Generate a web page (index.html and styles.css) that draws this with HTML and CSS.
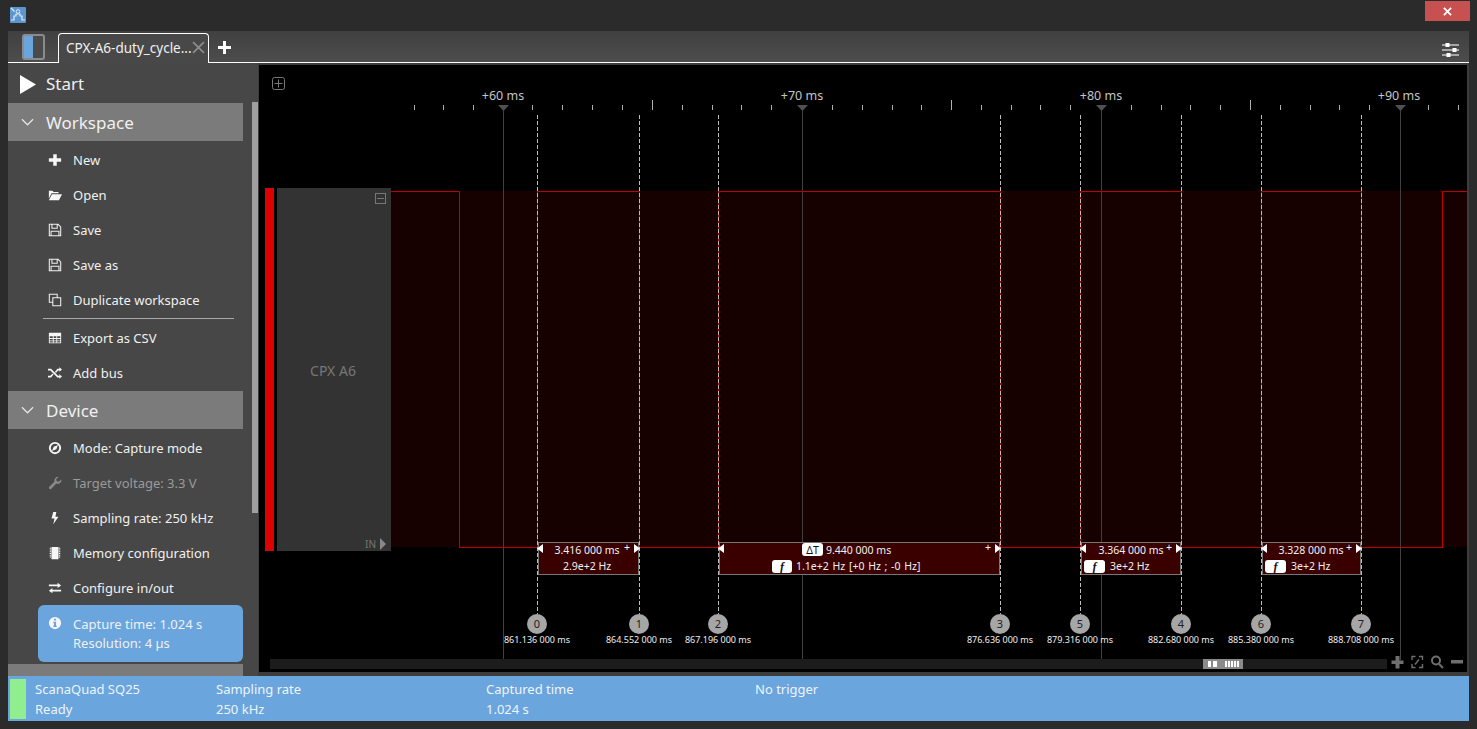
FILE: index.html
```html
<!DOCTYPE html>
<html lang="en">
<head>
  <meta charset="UTF-8">
  <title>ScanaStudio</title>
  <link rel="stylesheet" href="styles.css">
</head>
<body>

  <div class="titlebar">
    <svg class="app-icon" viewBox="0 0 16 16">
      <rect width="16" height="16" rx="1" fill="#5b96cf"/>
      <path d="M1 13h3V9h2V7h4v2h2v4h3M1 1l3.500 3.500" fill="none" stroke="#dfeaf5" stroke-width="1.200"/>
      <circle cx="8" cy="4.500" r="1.800" fill="none" stroke="#dfeaf5"/>
    </svg>
    <div class="close-btn">
      <svg viewBox="0 0 10 10"><path d="M1 1l8 8M9 1l-8 8" stroke="#fff" stroke-width="2"/></svg>
    </div>
  </div>

  <div class="tabbar">
    <div class="panel-toggle"><span></span></div>
    <div class="tab">
      <span class="tab-name">CPX-A6-duty_cycle...</span>
      <svg class="tab-close" viewBox="0 0 12 12"><path d="M1 1l10 10M11 1L1 11" stroke="#8c8c8c" stroke-width="1.600"/></svg>
    </div>
    <svg class="tab-add" viewBox="0 0 13 13"><path d="M5 0h3v5h5v3H8v5H5V8H0V5h5z" fill="#fff"/></svg>
    <svg class="tab-settings" viewBox="0 0 17 14">
      <path d="M0 2h17M0 7h17M0 12h17" stroke="#c8c8c8" stroke-width="1.400"/>
      <path d="M3.500 0h4v4h-4zM10.500 5h4v4h-4zM4.500 10h4v4h-4z" fill="#fff"/>
    </svg>
  </div>

  <div class="main">
    <div class="sidebar">
      <div class="side-list">
        <div class="start-row">
          <svg class="start-icon" viewBox="0 0 16 19"><path d="M0 0l16 9.500L0 19z" fill="#fff"/></svg>
          <span>Start</span>
        </div>

        <div class="section-head">
          <svg class="chevron" viewBox="0 0 14 8"><path d="M1 1l6 6 6-6" fill="none" stroke="#e6e6e6" stroke-width="1.300"/></svg>
          <span>Workspace</span>
        </div>
        <div class="section-body">
          <div class="item">
            <svg class="icon" viewBox="0 0 16 16"><path d="M6 1.500h4V6h5v4h-5v4.500H6V10H1V6h5z"/></svg>
            New
          </div>
          <div class="item">
            <svg class="icon" viewBox="0 0 16 16"><path d="M1 3h4l1.500 1.500H12V6H4L1 12zM1 14l3.500-7H16l-3.500 7z"/></svg>
            Open
          </div>
          <div class="item">
            <svg class="icon icon-line" viewBox="0 0 16 16"><path d="M1.500 1.500h10l3 3v10h-13zM4.500 1.500V6h6V1.500M3.500 14.500v-5h9v5"/></svg>
            Save
          </div>
          <div class="item">
            <svg class="icon icon-line" viewBox="0 0 16 16"><path d="M1.500 1.500h10l3 3v10h-13zM4.500 1.500V6h6V1.500M3.500 14.500v-5h9v5"/></svg>
            Save as
          </div>
          <div class="item">
            <svg class="icon icon-line" viewBox="0 0 16 16"><path d="M5 10.500H1.500v-9h9V5M5.500 5.500h9v9h-9z"/></svg>
            Duplicate workspace
          </div>
          <div class="divider"></div>
          <div class="item">
            <svg class="icon" viewBox="0 0 16 16"><path fill-rule="evenodd" d="M1 2h14v12H1zM2 6v2h3.500V6zM6.500 6v2h3V6zM10.500 6v2H14V6zM2 9v1.800h3.500V9zM6.500 9v1.800h3V9zM10.500 9v1.800H14V9zM2 11.800V13h3.500v-1.200zM6.500 11.800V13h3v-1.200zM10.500 11.800V13H14v-1.200z"/></svg>
            Export as CSV
          </div>
          <div class="item">
            <svg class="icon" viewBox="0 0 16 16"><path d="M13 1.500L16 4l-3 2.500V5h-1.500L9 8l-1-1.300L10.800 3H13zM0 3h3.500l8 8H13V9.500l3 2.500-3 2.500V13h-2.300l-8-8H0zM0 11h2.700L5.300 8.600l1 1.200L3.500 13H0z"/></svg>
            Add bus
          </div>
        </div>

        <div class="section-head">
          <svg class="chevron" viewBox="0 0 14 8"><path d="M1 1l6 6 6-6" fill="none" stroke="#e6e6e6" stroke-width="1.300"/></svg>
          <span>Device</span>
        </div>
        <div class="section-body">
          <div class="item">
            <svg class="icon" viewBox="0 0 16 16"><path fill-rule="evenodd" d="M8 1a7 7 0 1 1 0 14A7 7 0 0 1 8 1zM8 3.200a4.800 4.800 0 1 0 0 9.600A4.800 4.800 0 0 0 8 3.200zM11.500 4.500L9.500 9.500l-5 2 2-5z"/></svg>
            Mode: Capture mode
          </div>
          <div class="item item-off">
            <svg class="icon" viewBox="0 0 16 16"><path d="M15.500 4.500a4.500 4.500 0 0 1-6 4.200L3.800 14.500a1.600 1.600 0 0 1-2.300-2.300L7.300 6.500A4.500 4.500 0 0 1 12 1L9.300 3.700 10 6l2.300.7L15 4z"/></svg>
            Target voltage: 3.3 V
          </div>
          <div class="item">
            <svg class="icon" viewBox="0 0 16 16"><path d="M9.500 1H6L4 8.500h3.500L6 15l6-8.500H8.500z"/></svg>
            Sampling rate: 250 kHz
          </div>
          <div class="item">
            <svg class="icon" viewBox="0 0 16 16"><path d="M4 1h8v14H4zM2 2h1.500v1H2zM2 4h1.500v1H2zM2 6h1.500v1H2zM2 8h1.500v1H2zM2 10h1.500v1H2zM2 12h1.500v1H2zM12.500 2H14v1h-1.500zM12.500 4H14v1h-1.500zM12.500 6H14v1h-1.500zM12.500 8H14v1h-1.500zM12.500 10H14v1h-1.500zM12.500 12H14v1h-1.500z"/></svg>
            Memory configuration
          </div>
          <div class="item">
            <svg class="icon" viewBox="0 0 16 16"><path d="M1 4h10V2l4 3-4 3V6H1zM15 10H5V8l-4 3 4 3v-2h10z"/></svg>
            Configure in/out
          </div>
          <div class="info-box">
            <svg class="icon" viewBox="0 0 16 16"><path fill-rule="evenodd" d="M8 1a7 7 0 1 1 0 14A7 7 0 0 1 8 1zM6.800 3v2.200h2.400V3zM6 6.500V8h.8v3H6v1.500h4V11h-.8V6.500z"/></svg>
            <div>
              <div>Capture time: 1.024 s</div>
              <div>Resolution: 4 µs</div>
            </div>
          </div>
        </div>

        <div class="section-head"></div>
      </div>
      <div class="side-scroll"><div class="side-thumb"></div></div>
    </div>

    <div class="canvas">
      <svg class="wave" viewBox="259 65 1208 607" width="1208" height="607">
        <rect class="sig-fill" x="391" y="191" width="1076" height="356"/>

        <path class="grid" d="M503.500 105V660M802.500 105V660M1101.500 105V660M1400.500 105V660"/>
        <path class="sig-line" d="M391 191.500H459.500V547.500H537.500V191.500H639.500V547.500H718.500V191.500H1000.500V547.500H1080.500V191.500H1181.500V547.500H1261.500V191.500H1361.500V547.500H1442.500V191.500H1467"/>
        <path class="cursor" d="M537.500 115V614M639.500 115V614M718.500 115V614M1000.500 115V614M1080.500 115V614M1181.500 115V614M1261.500 115V614M1361.500 115V614"/>

        <!-- time ruler -->
        <path class="tick" d="M414.500 105v5M443.500 105v5M473.500 105v5M532.500 105v5M562.500 105v5M592.500 105v5M622.500 105v5M652.500 100v10M682.500 105v5M712.500 105v5M741.500 105v5M771.500 105v5M832.500 105v5M862.500 105v5M892.500 105v5M921.500 105v5M951.500 100v10M981.500 105v5M1011.500 105v5M1040.500 105v5M1070.500 105v5M1131.500 105v5M1161.500 105v5M1190.500 105v5M1220.500 105v5M1250.500 100v10M1280.500 105v5M1310.500 105v5M1339.500 105v5M1369.500 105v5M1428.500 105v5M1458.500 105v5"/>
        <path class="marker" d="M498 105h11l-5.500 6zM797 105h11l-5.500 6zM1096 105h11l-5.500 6zM1395 105h11l-5.500 6z"/>
        <text class="ruler-text" x="503" y="100">+60 ms</text>
        <text class="ruler-text" x="802" y="100">+70 ms</text>
        <text class="ruler-text" x="1101" y="100">+80 ms</text>
        <text class="ruler-text" x="1399" y="100">+90 ms</text>
        <rect class="box-icon" x="272.500" y="77.500" width="12" height="12" rx="2"/>
        <path class="box-icon" d="M278.500 79.500v8M274.500 83.500h8"/>

        <!-- channel header -->
        <rect class="ch-color" x="265" y="188" width="9" height="363"/>
        <rect class="ch-head" x="277" y="188" width="114" height="363"/>
        <text class="ch-name" x="333" y="376">CPX A6</text>
        <rect class="box-icon" x="375.500" y="193.500" width="10" height="10"/>
        <path class="box-icon" d="M377 198.500h7"/>
        <text class="ch-in" x="365" y="548">IN</text>
        <path class="ch-arrow" d="M380 538l6 6-6 6z"/>

        <!-- measures -->
        <rect class="measure" x="538.500" y="542.500" width="100" height="32"/>
        <path class="arrow" d="M543 544v9l-6-4.500zM634 544v9l6-4.500z"/>
        <text class="m-text" x="587" y="554">3.416 000 ms</text>
        <text class="m-plus" x="627" y="551">+</text>
        <text class="m-text" x="587" y="570">2.9e+2 Hz</text>

        <rect class="measure" x="719.500" y="542.500" width="280" height="32"/>
        <path class="arrow" d="M724 544v9l-6-4.500zM995 544v9l6-4.500z"/>
        <rect class="pill" x="802" y="543" width="21" height="13" rx="3"/>
        <text class="pill-text" x="812.500" y="554">ΔT</text>
        <text class="m-text left" x="826" y="554">9.440 000 ms</text>
        <text class="m-plus" x="988" y="551">+</text>
        <rect class="pill" x="772" y="560" width="20" height="13" rx="3"/>
        <text class="pill-text f" x="782" y="571">f</text>
        <text class="m-text left wide-words" x="796" y="570">1.1e+2 Hz [+0 Hz ; -0 Hz]</text>

        <rect class="measure" x="1081.500" y="542.500" width="99" height="32"/>
        <path class="arrow" d="M1086 544v9l-6-4.500zM1176 544v9l6-4.500z"/>
        <text class="m-text" x="1131" y="554">3.364 000 ms</text>
        <text class="m-plus" x="1169" y="551">+</text>
        <rect class="pill" x="1084" y="560" width="21" height="13" rx="3"/>
        <text class="pill-text f" x="1094.500" y="571">f</text>
        <text class="m-text left" x="1110" y="570">3e+2 Hz</text>

        <rect class="measure" x="1262.500" y="542.500" width="98" height="32"/>
        <path class="arrow" d="M1267 544v9l-6-4.500zM1356 544v9l6-4.500z"/>
        <text class="m-text" x="1311" y="554">3.328 000 ms</text>
        <text class="m-plus" x="1349" y="551">+</text>
        <rect class="pill" x="1265" y="560" width="21" height="13" rx="3"/>
        <text class="pill-text f" x="1275.500" y="571">f</text>
        <text class="m-text left" x="1291" y="570">3e+2 Hz</text>

        <!-- cursors -->
        <circle class="dot" cx="537" cy="624" r="10"/><text class="dot-text" x="537" y="628">0</text>
        <text class="dot-label" x="537" y="643">861.136 000 ms</text>
        <circle class="dot" cx="639" cy="624" r="10"/><text class="dot-text" x="639" y="628">1</text>
        <text class="dot-label" x="639" y="643">864.552 000 ms</text>
        <circle class="dot" cx="718" cy="624" r="10"/><text class="dot-text" x="718" y="628">2</text>
        <text class="dot-label" x="718" y="643">867.196 000 ms</text>
        <circle class="dot" cx="1000" cy="624" r="10"/><text class="dot-text" x="1000" y="628">3</text>
        <text class="dot-label" x="1000" y="643">876.636 000 ms</text>
        <circle class="dot" cx="1080" cy="624" r="10"/><text class="dot-text" x="1080" y="628">5</text>
        <text class="dot-label" x="1080" y="643">879.316 000 ms</text>
        <circle class="dot" cx="1181" cy="624" r="10"/><text class="dot-text" x="1181" y="628">4</text>
        <text class="dot-label" x="1181" y="643">882.680 000 ms</text>
        <circle class="dot" cx="1261" cy="624" r="10"/><text class="dot-text" x="1261" y="628">6</text>
        <text class="dot-label" x="1261" y="643">885.380 000 ms</text>
        <circle class="dot" cx="1361" cy="624" r="10"/><text class="dot-text" x="1361" y="628">7</text>
        <text class="dot-label" x="1361" y="643">888.708 000 ms</text>

        <!-- bottom scroller -->
        <rect class="hscroll" x="270" y="659" width="1117" height="10"/>
        <rect class="hthumb" x="1203" y="659" width="40" height="10"/>
        <path class="hmarks" d="M1208 661h3v6h-3zM1213 661h4v6h-4zM1225 661h2v6h-2zM1228 661h2v6h-2zM1231 661h2v6h-2zM1234 661h2v6h-2zM1237 661h2v6h-2z"/>
        <path class="zoom-icon" d="M1395.500 656h4v4.500h4v3.500h-4v4.500h-4V664h-4v-3.500h4z"/>
        <path class="zoom-line" d="M1412 660v-3.500h3.500M1422.500 660v-3.500h-3.500M1412 664v3.500h3.500M1422.500 664v3.500H1419M1415 664.500l4-5"/>
        <circle class="zoom-line wide" cx="1436" cy="660.500" r="4"/>
        <path class="zoom-line wide" d="M1439 664l4 4"/>
        <path class="zoom-icon" d="M1451 660h12v3.500h-12z"/>
      </svg>
    </div>
  </div>

  <div class="statusbar">
    <div class="led"></div>
    <div class="stat stat-device">
      <div>ScanaQuad SQ25</div>
      <div>Ready</div>
    </div>
    <div class="stat stat-rate">
      <div>Sampling rate</div>
      <div>250 kHz</div>
    </div>
    <div class="stat stat-time">
      <div>Captured time</div>
      <div>1.024 s</div>
    </div>
    <div class="stat">
      <div>No trigger</div>
    </div>
  </div>

</body>
</html>
```

FILE: styles.css
```css
html, body {
  margin: 0;
  height: 729px;
  overflow: hidden;
}

body {
  font-family: "Noto Sans", "Open Sans", sans-serif;
  font-size: 13px;
  background-color: #2b2b2b;
  color: #f0f0f0;
  padding: 0 8px;
  box-sizing: border-box;
}

/* window top */
.titlebar {
  height: 31px;
  margin: 0 -8px;
  position: relative;
}

.app-icon {
  position: absolute;
  left: 10px;
  top: 7px;
  width: 16px;
  height: 16px;
}

.close-btn {
  position: absolute;
  left: 1425px;
  top: 1px;
  width: 45px;
  height: 20px;
  background-color: #c75050;
  display: flex;
  align-items: center;
  justify-content: center;
}

.close-btn svg {
  width: 9px;
  height: 9px;
}

/* tabs */
.tabbar {
  height: 32px;
  background: linear-gradient(#404040, #4d4d4d);
  border-bottom: 1px solid #fff;
  box-sizing: border-box;
  display: flex;
  align-items: flex-end;
  position: relative;
}

.panel-toggle {
  width: 19px;
  height: 22px;
  border: 2px solid #8b8b8b;
  border-radius: 3px;
  margin: 0 13px 2px 14px;
  background-color: #4a4a4a;
}

.panel-toggle span {
  display: block;
  width: 9px;
  height: 100%;
  background-color: #6aa5dd;
}

.tab {
  width: 151px;
  height: 30px;
  margin-bottom: -1px;
  border: 1px solid #fff;
  border-bottom: none;
  border-radius: 4px 4px 0 0;
  background-color: #484848;
  box-sizing: border-box;
  display: flex;
  align-items: center;
  padding: 0 4px 2px 7px;
  position: relative;
}

.tab-name {
  font-size: 13.500px;
  white-space: nowrap;
}

.tab-close {
  width: 13px;
  height: 13px;
  position: absolute;
  right: 3px;
  top: 7px;
}

.tab-add {
  width: 13px;
  height: 13px;
  margin: 0 0 8px 9px;
}

.tab-settings {
  width: 17px;
  height: 14px;
  margin: 0 10px 5px auto;
}

/* main part */
.main {
  height: 613px;
  display: flex;
  background-color: #3c3c3c;
}

.sidebar {
  width: 250px;
  height: 100%;
  display: flex;
  background-color: #474747;
  padding-top: 2px;
  box-sizing: border-box;
  flex-shrink: 0;
}

.side-list {
  width: 235px;
  overflow: hidden;
}

.side-scroll {
  width: 6px;
  margin-left: 9px;
}

.side-thumb {
  margin-top: 37px;
  height: 411px;
  background-color: #9f9f9f;
}

.start-row {
  height: 38px;
  display: flex;
  align-items: center;
  font-size: 17px;
  padding-left: 12px;
  gap: 10px;
}

.start-row span {
  padding-bottom: 2px;
}

.section-head {
  height: 38px;
  background-color: #7b7b7b;
  display: flex;
  align-items: center;
  font-size: 17px;
  padding-left: 13px;
  gap: 12px;
}

.start-icon {
  width: 16px;
  height: 19px;
}

.chevron {
  width: 13px;
  height: 8px;
}

.section-body {
  padding: 1px 0;
}

.section-body:last-of-type {
  padding-bottom: 0;
}

.item {
  height: 35px;
  display: flex;
  align-items: center;
  padding-left: 40px;
  gap: 11px;
  white-space: nowrap;
}

.item-off {
  color: #9a9a9a;
}

.item-off .icon {
  fill: #8a8a8a;
}

.icon {
  width: 14px;
  height: 14px;
  fill: #f6f6f6;
  flex-shrink: 0;
}

.icon-line {
  fill: none;
  stroke: #f0f0f0;
  stroke-width: 1.200;
}

.divider {
  height: 1px;
  margin: 1px 9px 1px 35px;
  background-color: #a8a8a8;
}

.info-box {
  height: 57px;
  margin: 0 0 1px 30px;
  padding: 10px 0 0 10px;
  background-color: #6aa5dd;
  border-radius: 6px;
  box-sizing: border-box;
  display: flex;
  gap: 11px;
  line-height: 19px;
}

.info-box .icon {
  margin-top: 1px;
}

/* waveform */
.canvas {
  flex: 1;
  height: 607px;
  margin: 2px 0 0 1px;
  background-color: #000;
  border-right: 2px solid #3c3c3c;
}

.wave {
  display: block;
  font-family: "Noto Sans", sans-serif;
}

.sig-fill { fill: #160000; }
.grid { stroke: #404040; fill: none; shape-rendering: crispEdges; }
.sig-line { stroke: #c00000; fill: none; shape-rendering: crispEdges; }
.cursor { stroke: #bdbdbd; fill: none; stroke-dasharray: 4 2; shape-rendering: crispEdges; }
.tick { stroke: #b0b0b0; fill: none; shape-rendering: crispEdges; }
.marker { fill: #505050; }
.ruler-text { fill: #c4c4c4; font-size: 12.500px; text-anchor: middle; }
.box-icon { fill: none; stroke: #777; }

.ch-color { fill: #dc0000; }
.ch-head { fill: #333; }
.ch-name { fill: #777; font-size: 14px; text-anchor: middle; }
.ch-in { fill: #777; font-size: 10px; }
.ch-arrow { fill: #888; }

.measure { fill: #3a0000; stroke: #777; shape-rendering: crispEdges; }
.arrow { fill: #fff; }
.m-text { fill: #f0f0f0; font-size: 10.500px; text-anchor: middle; }
.m-text.left { text-anchor: start; }
.wide-words { word-spacing: 1px; }
.m-plus { fill: #fff; font-size: 10.500px; text-anchor: middle; }
.pill { fill: #fff; }
.pill-text { fill: #111; font-size: 10.500px; text-anchor: middle; }
.pill-text.f { font-family: "Liberation Serif", serif; font-style: italic; font-weight: bold; font-size: 12px; }

.dot { fill: #a6a6a6; }
.dot-text { fill: #222; font-size: 11px; text-anchor: middle; }
.dot-label { fill: #eee; font-size: 9px; text-anchor: middle; }

.hscroll { fill: #1c1c1c; }
.hthumb { fill: #8a8a8a; }
.hmarks { fill: #fff; }
.zoom-icon { fill: #6f6f6f; }
.zoom-line { fill: none; stroke: #6f6f6f; stroke-width: 1.400; }
.zoom-line.wide { stroke-width: 2; }

/* bottom status */
.statusbar {
  height: 45px;
  background-color: #6aa5dd;
  display: flex;
  padding: 3px 0 2px 2px;
  box-sizing: border-box;
  color: #eef4fb;
}

.led {
  width: 16px;
  background-color: #90ee90;
  margin-right: 9px;
}

.stat {
  line-height: 20px;
}

.stat-device { width: 181px; }
.stat-rate { width: 270px; }
.stat-time { width: 269px; }
```
